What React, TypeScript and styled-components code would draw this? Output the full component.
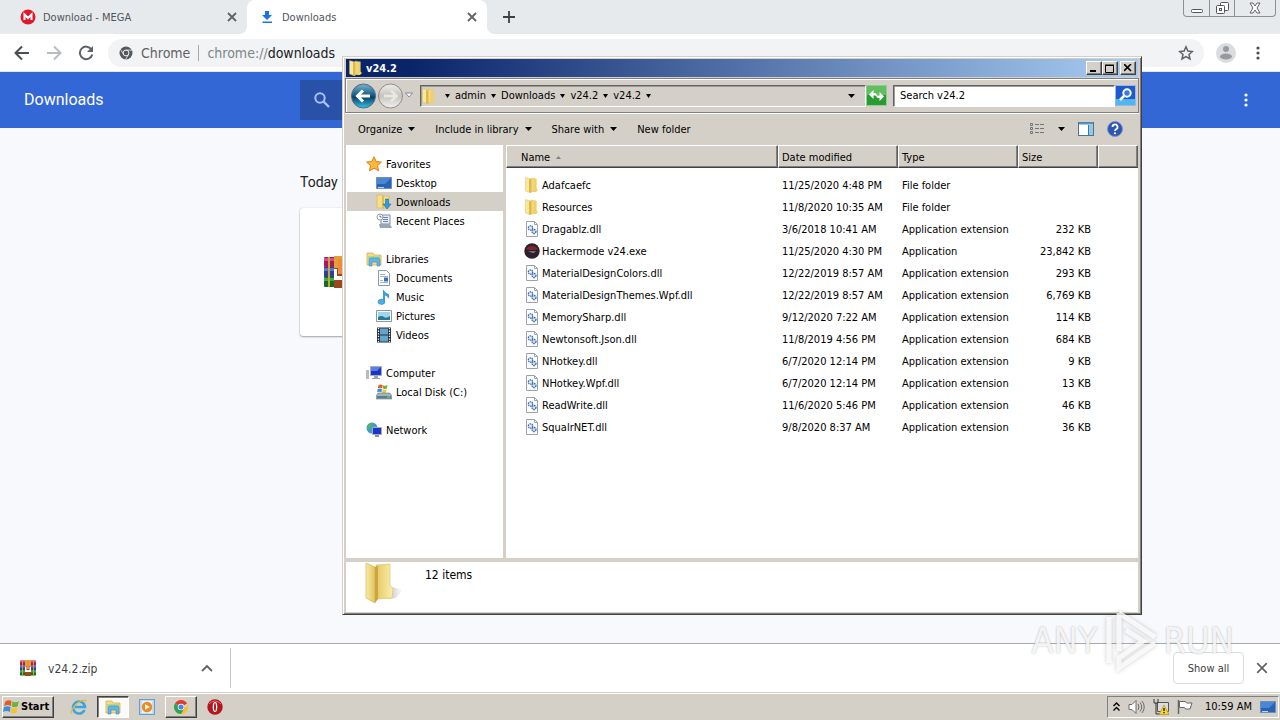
import React from "react";
import styled, { createGlobalStyle, css } from "styled-components";

const ui = `"DejaVu Sans Condensed", Tahoma, "DejaVu Sans", sans-serif`;

const GlobalStyle = createGlobalStyle`
  *, *::before, *::after { box-sizing: border-box; }
  body { margin: 0; font-family: ${ui}; font-size: 11px; color: #000; }
  button, input { font: inherit; color: inherit; }
  button { padding: 0; border: 0; background: none; cursor: pointer; }
  svg { display: block; flex: none; }
  a { color: inherit; text-decoration: none; }
`;

const Desktop = styled.div`
  position: relative;
  display: flex;
  flex-direction: column;
  min-height: 100vh;
  overflow: hidden;
  background: #f7f9fc;
`;

/* ---------- Browser ---------- */

const TabStrip = styled.header`
  display: flex;
  height: 34px;
  background: #e7eaed;
  color: #50555a;
`;

const Tab = styled.div<{ $active?: boolean }>`
  position: relative;
  display: flex;
  align-items: center;
  gap: 7px;
  width: ${p => (p.$active ? 240 : 247)}px;
  padding: 0 10px 0 ${p => (p.$active ? 12 : 20)}px;
  ${p =>
    p.$active &&
    css`
      background: #fff;
      border-radius: 8px 8px 0 0;
      &::before,
      &::after {
        content: "";
        position: absolute;
        bottom: 0;
        width: 8px;
        height: 8px;
      }
      &::before {
        left: -8px;
        background: radial-gradient(circle at 0 0, transparent 8px, #fff 8px);
      }
      &::after {
        right: -8px;
        background: radial-gradient(circle at 100% 0, transparent 8px, #fff 8px);
      }
    `}
`;

const TabTitle = styled.span`
  flex: 1;
`;

const IconButton = styled.button`
  display: grid;
  place-items: center;
  flex: none;
`;

const NewTab = styled(IconButton)`
  width: 44px;
`;

const CaptionGroup = styled.div`
  display: flex;
  height: 17px;
  margin: 0 4px 0 auto;
  border: 1px solid #8c9095;
  border-top: 0;
  border-radius: 0 0 4px 4px;
`;

const CaptionButton = styled(IconButton)<{ $wide?: boolean }>`
  width: ${p => (p.$wide ? 41 : 25)}px;
  & + & { border-left: 1px solid #8c9095; }
`;

const NavBar = styled.nav`
  display: flex;
  align-items: center;
  height: 38px;
  padding: 0 14px;
  gap: 16px;
  border-bottom: 1px solid #e4e7ea;
  background: #fff;
`;

const Omnibox = styled.div`
  display: flex;
  align-items: center;
  flex: 1;
  height: 28px;
  margin: 0 -4px 0 -2px;
  padding: 0 10px 0 11px;
  border-radius: 14px;
  background: #f1f3f4;
  font-size: 14px;
  color: #5f6368;
`;

const BrowserTools = styled.div`
  display: flex;
  align-items: center;
  gap: 14px;
`;

const SiteName = styled.span`
  margin-left: 8px;
  padding-right: 8px;
  border-right: 1px solid #a4a8ac;
`;

const Url = styled.span`
  flex: 1;
  margin-left: 8px;
  color: #80868b;
  b { font-weight: normal; color: #202124; }
`;

const PageHeader = styled.div`
  display: grid;
  grid-template-columns: 1fr minmax(0, 680px) 1fr;
  align-items: center;
  height: 56px;
  background: #3367d6;
  color: #fff;
`;

const PageTitle = styled.h1`
  margin: 0;
  padding-left: 24px;
  font: 400 16px/24px Roboto, sans-serif;
`;

const SearchDownloads = styled.label`
  display: flex;
  align-items: center;
  height: 40px;
  padding: 0 12px;
  gap: 12px;
  background: #2951a8;
  input {
    flex: 1;
    border: 0;
    outline: 0;
    background: none;
  }
`;

const HeaderMenu = styled(IconButton)`
  width: 20px;
  height: 40px;
  margin: 0 24px 0 auto;
`;

const DownloadsPage = styled.main`
  flex: 1;
  width: 100%;
  max-width: 680px;
  margin: 0 auto;
  padding-top: 44px;
`;

const DateHeading = styled.h2`
  margin: 0 0 16px;
  font: 400 14px/20px Roboto, sans-serif;
  color: #202124;
`;

const DownloadCard = styled.article`
  height: 128px;
  padding: 48px 24px;
  border-radius: 3px;
  background: #fff;
  box-shadow: 0 1px 2px rgba(0, 0, 0, 0.35), 0 0 1px rgba(0, 0, 0, 0.2);
`;

const Shelf = styled.footer`
  display: flex;
  align-items: center;
  height: 49px;
  padding-right: 12px;
  border-top: 1px solid #a9acaf;
  background: #fff;
`;

const ShelfItem = styled.div`
  display: flex;
  align-items: center;
  width: 231px;
  height: 40px;
  padding: 0 16px 0 20px;
  gap: 12px;
  border-right: 1px solid #c8cacc;
  font-size: 12px;
  color: #3c4043;
  span { flex: 1; padding-top: 2px; }
`;

const ShowAll = styled.button`
  width: 71px;
  height: 32px;
  margin: 0 12px 0 auto;
  border: 1px solid #dadce0;
  border-radius: 4px;
  color: #3c4043;
`;

/* ---------- Taskbar ---------- */

const Taskbar = styled.footer`
  display: flex;
  align-items: center;
  height: 28px;
  padding: 2px 1px 2px 2px;
  gap: 2px;
  border-top: 1px solid #d4d0c8;
  background: #d4d0c8;
  box-shadow: inset 0 1px #fff;
`;

const raised = css`
  border: 1px solid;
  border-color: #fff #404040 #404040 #fff;
  box-shadow: inset -1px -1px #808080;
`;

const StartButton = styled.button`
  ${raised}
  display: flex;
  align-items: center;
  gap: 1px;
  width: 52px;
  height: 22px;
  margin-right: 7px;
  font-weight: bold;
`;

const TaskButton = styled.button<{ $look?: "raised" | "pressed" }>`
  display: grid;
  place-items: center;
  width: 32px;
  height: 22px;
  ${p => p.$look === "raised" && raised}
  ${p =>
    p.$look === "pressed" &&
    css`
      border: 1px solid;
      border-color: #404040 #fff #fff #404040;
      box-shadow: inset 1px 1px #808080;
      background: #fbfaf8;
    `}
`;

const Tray = styled.div`
  display: flex;
  align-items: center;
  height: 22px;
  margin-left: auto;
  padding: 0 2px 0 5px;
  border: 1px solid;
  border-color: #808080 #fff #fff #808080;
  gap: 8px;
`;

const Clock = styled.time`
  margin: 0 0 0 4px;
`;

/* ---------- Explorer window ---------- */

const Window = styled.section`
  position: absolute;
  inset: 56px 138px 105px 342px;
  display: flex;
  flex-direction: column;
  padding: 1px 2px 1px 2px;
  border: 1px solid;
  border-color: #d4d0c8 #404040 #404040 #d4d0c8;
  background: #d4d0c8;
  box-shadow: inset 1px 1px #fff, inset -1px -1px #808080;
`;

const TitleBar = styled.header`
  display: flex;
  align-items: center;
  height: 18px;
  margin: 1px 1px 0;
  padding: 0 2px;
  background: linear-gradient(to right, #0a246a 8%, #a6caf0 98%);
  color: #fff;
  font-weight: bold;
  h2 { flex: 1; margin: 0 0 0 2px; font-size: 11px; }
`;

const WinButton = styled(IconButton)<{ $gap?: boolean }>`
  ${raised}
  width: 16px;
  height: 14px;
  margin-left: ${p => (p.$gap ? 2 : 0)}px;
  background: #d4d0c8;
`;

const AddressRow = styled.div`
  display: flex;
  align-items: center;
  height: 35px;
  margin: 1px 0 0;
  padding: 0 2px 0 4px;
  border: 1px solid #808080;
  box-shadow: inset 1px 1px #fff, 0 1px #fff;
`;

const sunken = css`
  border: 1px solid;
  border-color: #606060 #fff #fff #606060;
  box-shadow: inset 1px 1px #a09c94;
`;

const AddressBox = styled.div`
  ${sunken}
  display: flex;
  align-items: center;
  flex: 1;
  height: 22px;
  margin-left: 6px;
  padding: 0 10px 0 0;
  gap: 6px;
`;

const Crumbs = styled.ol`
  display: flex;
  flex: 1;
  margin: 0;
  padding: 0 0 0 2px;
  gap: 5px;
  list-style: none;
  li { display: flex; align-items: center; gap: 5px; }
`;

const SearchBox = styled.input`
  ${sunken}
  width: 222px;
  height: 22px;
  margin-left: 6px;
  padding: 0 6px;
  border-radius: 0;
  outline: 0;
  background: #fff;
  &::placeholder { color: #000; opacity: 1; }
`;

const CommandBar = styled.div`
  display: flex;
  align-items: center;
  height: 32px;
  padding: 0 16px 0 13px;
  gap: 20px;
`;

const Command = styled.button`
  display: flex;
  align-items: center;
  gap: 6px;
  height: 24px;
`;

const ViewTools = styled.div`
  display: flex;
  align-items: center;
  gap: 13px;
  margin-left: auto;
`;

const Panes = styled.div`
  display: flex;
  flex: 1;
  min-height: 0;
  margin: 0 1px;
  background: #fff;
`;

const Sidebar = styled.nav`
  width: 160px;
  padding-top: 9px;
  border-right: 3px solid #d4d0c8;
  ul { margin: 0 0 19px; padding: 0; list-style: none; }
`;

const Place = styled.a<{ $child?: boolean; $selected?: boolean }>`
  display: flex;
  align-items: center;
  height: 19px;
  margin-left: 1px;
  padding-left: ${p => (p.$child ? 29 : 19)}px;
  gap: 4px;
  line-height: 15px;
  background: ${p => (p.$selected ? "#d4d0c8" : "none")};
  span { padding-top: 2px; }
`;

const FileTable = styled.table`
  flex: 1;
  align-self: flex-start;
  table-layout: fixed;
  border-collapse: separate;
  border-spacing: 0;
  td { height: 22px; padding: 0 4px; white-space: nowrap; }
`;

const ColumnHead = styled.th<{ $first?: boolean }>`
  ${raised}
  height: 23px;
  padding: 1px 4px 0 ${p => (p.$first ? 14 : 3)}px;
  border-color: #fff #606060 #404040 #fff;
  background: #d4d0c8;
  font-weight: normal;
  text-align: left;
`;

const HeadLabel = styled.span`
  display: flex;
  align-items: center;
  gap: 6px;
`;

const Spacer = styled.tr`
  && td { height: 6px; }
`;

const FileName = styled.a`
  display: flex;
  align-items: center;
  gap: 2px;
  padding-left: 14px;
`;

const SizeCell = styled.td`
  text-align: right;
  && { padding-right: 7px; }
`;

const Details = styled.footer`
  display: flex;
  height: 54px;
  margin: 0 1px 1px;
  padding-left: 18px;
  gap: 19px;
  border-top: 4px solid #d4d0c8;
  background: #fff;
  font-size: 12px;
  p { margin: 5px 0 0; line-height: 16px; }
`;

const Watermark = styled.div`
  position: absolute;
  right: 46px;
  bottom: 44px;
  display: flex;
  align-items: center;
  height: 70px;
  gap: 4px;
  pointer-events: none;
  font: 400 36px/70px ${ui};
  color: rgba(255, 255, 255, 0.85);
  text-shadow: 0 0 2px rgba(0, 0, 0, 0.3);
  svg { filter: drop-shadow(0 0 2px rgba(0, 0, 0, 0.25)); }
`;

/* ---------- Icons ---------- */

const Caret = ({ w = 7 }: { w?: number }) => (
  <svg width={w} height="4" viewBox="0 0 8 4" preserveAspectRatio="none"><path d="M0 0h8L4 4z" /></svg>
);

const Cross = ({ s = 10 }: { s?: number }) => (
  <svg width={s} height={s} viewBox="0 0 10 10"><path d="M1 1l8 8M9 1L1 9" stroke="#5f6368" strokeWidth={s > 10 ? 1.4 : 1.8} /></svg>
);

const MegaIcon = () => (
  <svg width="16" height="16" viewBox="0 0 16 16">
    <circle cx="8" cy="8" r="7.500" fill="#e1182c" />
    <path d="M4.500 11V5.500L8 9l3.500-3.500V11" fill="none" stroke="#fff" strokeWidth="2" />
  </svg>
);

const DownloadIcon = () => (
  <svg width="16" height="16" viewBox="0 0 16 16" fill="#1a73e8">
    <path d="M6 2h4v4h3L8 11 3 6h3zM3.500 12.500h9.500V14H3.500z" />
  </svg>
);

const ArrowIcon = ({ flip, color }: { flip?: boolean; color: string }) => (
  <svg width="16" height="16" viewBox="0 0 16 16" fill="none" stroke={color} strokeWidth="2">
    <path d={flip ? "M1 8h13M8 1.500L14.500 8 8 14.500" : "M15 8H2M8 1.500L1.500 8 8 14.500"} />
  </svg>
);

const ReloadIcon = () => (
  <svg width="16" height="16" viewBox="0 0 16 16" fill="none" stroke="#5f6368" strokeWidth="2">
    <path d="M13.500 4.500A6.300 6.300 0 1 0 14.300 9.500" />
    <path d="M15 1v6H9z" fill="#5f6368" stroke="none" />
  </svg>
);

const ChromeGray = () => (
  <svg width="14" height="14" viewBox="0 0 14 14">
    <circle cx="7" cy="7" r="6.500" fill="#54585c" />
    <circle cx="7" cy="7" r="2.900" fill="none" stroke="#f1f3f4" strokeWidth="1" />
    <path d="M7 4.100h6M4.500 8.400l-3-5M9.500 8.500L6.500 13.500" stroke="#f1f3f4" strokeWidth=".8" />
  </svg>
);

const Star = () => (
  <svg width="16" height="16" viewBox="0 0 16 16">
    <path d="M8 1.800l1.900 4.200 4.500.5-3.400 3 1 4.500L8 11.700 4 14l1-4.500-3.400-3 4.500-.5z" fill="none" stroke="#5f6368" strokeWidth="1.500" />
  </svg>
);

const Avatar = () => (
  <svg width="20" height="20" viewBox="0 0 20 20">
    <circle cx="10" cy="10" r="10" fill="#dadce0" />
    <circle cx="10" cy="6" r="3" fill="#979a9e" />
    <ellipse cx="10" cy="13.500" rx="6" ry="3" fill="#979a9e" />
  </svg>
);

const Dots = ({ color }: { color: string }) => (
  <svg width="16" height="16" viewBox="0 0 16 16" fill={color}>
    <circle cx="8" cy="3" r="1.600" /><circle cx="8" cy="8" r="1.600" /><circle cx="8" cy="13" r="1.600" />
  </svg>
);

const SearchIcon = () => (
  <svg width="20" height="20" viewBox="0 0 20 20" fill="none" stroke="#a9c3f5" strokeWidth="2">
    <circle cx="8" cy="8" r="4.700" /><path d="M11.500 11.500L17 17" strokeWidth="2.400" />
  </svg>
);

const RarIcon = ({ size }: { size: number }) => (
  <svg width={size} height={size} viewBox="0 0 32 32">
    <rect y="1" width="32" height="10" rx="1" fill="#a8195c" /><rect y="2" width="32" height="3" fill="#d84a8c" />
    <rect y="11" width="32" height="10" fill="#2b3f9d" /><rect y="12" width="32" height="3" fill="#5873d6" />
    <rect y="21" width="32" height="10" rx="1" fill="#176b26" /><rect y="22" width="32" height="3" fill="#3caa48" />
    <path d="M4 1h2v30H4zM26 1h2v30h-2z" fill="#c9a72b" />
    <rect x="10" y="0" width="12" height="32" fill="#9b4a1c" /><rect x="10" y="0" width="12" height="12" fill="#e0a233" />
    <path d="M10 13h3v7h6v-7h3v11H10z" fill="#fff" /><path d="M14 3h4v15h-4z" fill="#f08a3c" />
  </svg>
);

const FolderIcon = ({ w = 16, h = 16 }: { w?: number; h?: number }) => (
  <svg width={w} height={h} viewBox="0 0 16 16">
    <path d="M7 1l5 1v12l-5 1z" fill="#f3da78" stroke="#d7b64c" strokeWidth=".4" />
    <path d="M10 2l2.500-.500v10L14 13l-2 2H9z" fill="#f0d067" />
    <path d="M1.500.500L7 2v14l-5.500-2z" fill="#f8e79c" stroke="#d3b04a" strokeWidth=".4" />
    <path d="M5 2l2 .5V16l-2-1z" fill="#dcb94e" />
  </svg>
);

const BigFolder = () => (
  <svg width="42" height="42" viewBox="0 0 42 42">
    <defs>
      <linearGradient id="fa" x1="0" x2="1"><stop offset="0" stopColor="#e6c861" /><stop offset="1" stopColor="#fbeeb0" /></linearGradient>
      <linearGradient id="fb" x1="0" x2="1"><stop offset="0" stopColor="#f9eaa4" /><stop offset="1" stopColor="#e3c45c" /></linearGradient>
      <linearGradient id="fs" x1="0" x2="1"><stop offset="0" stopColor="#888" /><stop offset="1" stopColor="#fff" /></linearGradient>
    </defs>
    <path d="M24 37l4-12 11 3-7 8z" fill="url(#fs)" opacity=".5" />
    <path d="M12 3l14-1v21l3 4-1 9-15 1z" fill="url(#fa)" stroke="#d9bd60" strokeWidth=".6" />
    <path d="M2 1l9 4v36l-9-5z" fill="url(#fb)" stroke="#cfae4c" strokeWidth=".6" />
    <path d="M11 5l3-1v33l-3 4z" fill="#c9a544" />
  </svg>
);

const NavButtonIcon = ({ back }: { back?: boolean }) => (
  <svg width="27" height="26" viewBox="0 0 27 26">
    <defs>
      <linearGradient id="nb" x2="0" y2="1"><stop offset="0" stopColor="#7db2cc" /><stop offset=".45" stopColor="#17618d" /><stop offset=".55" stopColor="#074069" /><stop offset="1" stopColor="#37c4e8" /></linearGradient>
      <linearGradient id="nf" x2="0" y2="1"><stop offset="0" stopColor="#eeeeec" /><stop offset=".5" stopColor="#c6c4bf" /><stop offset="1" stopColor="#f2f1ef" /></linearGradient>
    </defs>
    <circle cx="13.500" cy="13" r="12" fill={back ? "url(#nb)" : "url(#nf)"} stroke={back ? "#4c6c80" : "#8e8c88"} />
    {back
      ? <path d="M20 13H9M13 7.500L7.500 13l5.500 5.500" fill="none" stroke="#fff" strokeWidth="3" />
      : <path d="M7 13h11M14 7.500l5.500 5.500-5.500 5.500" fill="none" stroke="#e9e8e6" strokeWidth="2.500" />}
  </svg>
);

const RefreshIcon = () => (
  <svg width="21" height="21" viewBox="0 0 21 21">
    <rect x=".5" y=".5" width="20" height="20" fill="#2a9a35" stroke="#8ccf8e" />
    <rect x="1" y="1" width="19" height="9" fill="#63bd63" />
    <path d="M3 9.500L7.500 5v3H9q2 0 2 4-1-1.500-2-1.500H7.500V14zM18 11.500L13.500 16v-3H12q-2 0-2-4 1 1.500 2 1.500h1.500V7z" fill="#fff" />
  </svg>
);

const FindIcon = () => (
  <svg width="21" height="21" viewBox="0 0 21 21">
    <rect x=".5" y=".5" width="20" height="20" fill="#1c59cf" stroke="#9db7e0" />
    <rect x="1" y="14" width="19" height="6" fill="#4fb6f3" />
    <circle cx="12" cy="8" r="3.700" fill="#3c78dd" stroke="#fff" strokeWidth="2" /><path d="M9 11l-4 4" stroke="#fff" strokeWidth="2.500" />
  </svg>
);

const ViewIcon = () => (
  <svg width="16" height="14" viewBox="0 0 16 14" fill="none" stroke="#70757a">
    <path d="M1.500 1.500h2v2h-2zM1.500 5.500h2v2h-2zM1.500 9.500h2v2h-2z" />
    <path d="M6 2.500h4M11 2.500h4M6 6.500h4M11 6.500h4M6 10.500h4M11 10.500h4" />
  </svg>
);

const PaneIcon = () => (
  <svg width="16" height="14" viewBox="0 0 16 14">
    <rect x=".5" y=".5" width="15" height="13" fill="#fff" stroke="#47749c" />
    <path d="M1 1.500h14" stroke="#5d93bd" strokeWidth="2" /><rect x="10" y="3" width="5" height="10" fill="#8ecbe8" /><path d="M10.500 3v10" stroke="#47749c" />
  </svg>
);

const HelpIcon = () => (
  <svg width="16" height="16" viewBox="0 0 16 16">
    <circle cx="8" cy="8" r="7.500" fill="#2b55b8" stroke="#7f92bd" />
    <path d="M5.500 6a2.500 2.500 0 1 1 3.600 2.200C8.300 8.700 8 9 8 10" fill="none" stroke="#fff" strokeWidth="1.800" /><circle cx="8" cy="12.300" r="1.100" fill="#fff" />
  </svg>
);

const DllIcon = () => (
  <svg width="16" height="16" viewBox="0 0 16 16">
    <path d="M2.500.5h8l3 3v12h-11z" fill="#fdfdfe" stroke="#9aa3ad" /><path d="M10.500.5v3h3" fill="none" stroke="#9aa3ad" />
    <circle cx="6.500" cy="7" r="2.200" fill="#e4eefa" stroke="#3c6da9" strokeWidth="1.300" strokeDasharray="1.500 .6" />
    <circle cx="10" cy="10.500" r="2" fill="#cfe2f7" stroke="#3c6da9" strokeWidth="1.300" strokeDasharray="1.500 .6" />
  </svg>
);

const ExeIcon = () => (
  <svg width="16" height="16" viewBox="0 0 16 16">
    <circle cx="8" cy="8" r="7.700" fill="#30202a" /><path d="M2 6c3-4 9-4 12 0l-3 1H5z" fill="#7d2530" /><path d="M4 8h8l-2 2H8z" fill="#6b707c" />
  </svg>
);

const Sheet = ({ children }: { children?: React.ReactNode }) => (
  <svg width="16" height="16" viewBox="0 0 16 16">{children}</svg>
);

const LibraryShape = () => (
  <>
    <path d="M1 2h6l1 2h7v10H1z" fill="#f5dc7c" stroke="#cda94a" strokeWidth=".7" />
    <path d="M2 5h12v3H2z" fill="#a7d99a" />
    <path d="M3 15V9q0-2 2-2h7q2 0 2 2v6h-3v-4H6v4z" fill="#66b4e6" stroke="#4287bb" strokeWidth=".6" />
  </>
);

const FlagShape = () => (
  <>
    <path d="M2 3q3-2 5.500-.3L7 7Q4 5.500 1 7z" fill="#e85a24" /><path d="M8.300 3Q11 4.500 14 2.800l-1 4.400q-2.500 1.600-5.300.2z" fill="#6cb33e" />
    <path d="M1 8q3-1.500 5.700 0L6 12.300Q3 10.800 0 12.300z" fill="#3e8ede" /><path d="M7.500 8.400q2.500 1.500 5.300 0L12 12.800q-2.800 1.500-5.200.1z" fill="#f8c22f" />
  </>
);

const placeIcons: Record<string, React.ReactNode> = {
  star: <path d="M8 .8l2.200 4.700 5.200.6-3.900 3.500 1.100 5.200L8 12.200l-4.600 2.600 1.100-5.200L.6 6.100l5.200-.6z" fill="#fbb83a" stroke="#dd7e1b" />,
  desktop: <><path d="M.5 2.500h15v11H.5z" fill="#2b62b5" stroke="#6e8fb8" /><path d="M1 3h14L9 9H1z" fill="#4b86d2" /><path d="M2 12.500h6" stroke="#b9d5f1" /></>,
  downloads: <><path d="M1 1h5l1 1h6v12H1z" fill="#f6df85" stroke="#d5b34d" strokeWidth=".6" /><path d="M6 1l2 1v13l-2-1z" fill="#dfbd54" /><path d="M9.500 5h3v5H15l-4 5-4-5h2.500z" fill="#2f9be0" stroke="#1972b0" strokeWidth=".6" /></>,
  recent: <><path d="M5 2h9v9h-9z" fill="#e9eef5" stroke="#7e8fa6" /><path d="M7 4.500h5M7 6.500h5M7 8.500h5" stroke="#6283b5" /><circle cx="4" cy="4" r="3" fill="#fff" stroke="#99a" /><path d="M4 2.500V4h1.500" fill="none" stroke="#567" /><path d="M3 11h11l2 4H4z" fill="#9aa4b2" /></>,
  libraries: <LibraryShape />,
  documents: <><path d="M2.500.5h8l3 3v12h-11z" fill="#fff" stroke="#8d98a6" /><path d="M4 4.500h5M4 6.500h8M4 12.500h8M4 10.500h3" stroke="#9db4d4" /><path d="M8 7.500h4v4H8z" fill="#3f6db2" /></>,
  music: <><path d="M8 1q1 3 5 4 1 3-1 5 0-3-3-3.500V13H7V1z" fill="#3d9fd8" /><ellipse cx="5.500" cy="12.800" rx="3.500" ry="2.700" fill="#49aee2" stroke="#2a80b5" strokeWidth=".5" /></>,
  pictures: <><path d="M.5 2.500h15v11H.5z" fill="#fff" stroke="#8b97a3" /><path d="M2 4h12v8H2z" fill="#9fd6ee" /><path d="M2 9q4-2 6 0t6-1v4H2z" fill="#2a7990" /></>,
  videos: <><path d="M1 .5h14v15H1z" fill="#283038" /><path d="M4 1.500h8v6H4zM4 8.500h8v6H4z" fill="#62a5cf" /><path d="M2.500 1v14M13.500 1v14" stroke="#fff" strokeWidth="1.200" strokeDasharray="1.300 1.300" /></>,
  computer: <><path d="M0 5h3v9H0z" fill="#b8bcc2" /><path d="M4.500 1.500h11v9h-11z" fill="#1c35c8" stroke="#a5adba" /><path d="M5 2h10l-4 4H5z" fill="#5c7ceb" /><path d="M8 11h4v2h2v1H6v-1h2z" fill="#9ba3ae" /></>,
  disk: <><g transform="translate(1 -1) scale(.75)"><FlagShape /></g><path d="M2 9h12l2 3v3H0v-3z" fill="#9fb3bd" stroke="#697d87" strokeWidth=".6" /><path d="M1 12h14v2.500H1z" fill="#5b7d8d" /><path d="M11 13h3" stroke="#7fe05e" /></>,
  network: <><circle cx="6" cy="6" r="5.500" fill="#3f9bd2" /><path d="M2 3q3-3 5-2L5 5 3 8Q0 6 2 3zM8 4l3 1-2 4z" fill="#58b45c" /><path d="M6.500 5.500h9v7h-9z" fill="#1c35c8" stroke="#a5adba" /><path d="M9 13h4v2H9z" fill="#98a" /></>,
};

const ChromeColor = () => (
  <svg width="14" height="14" viewBox="0 0 16 16">
    <path d="M8 8L1.070 4A8 8 0 0 1 14.930 4z" fill="#e33b2e" /><path d="M8 8h6.930L14.930 4A8 8 0 0 1 8 16z" fill="#fbc116" /><path d="M8 8L1.070 4A8 8 0 0 0 8 16l3.500-6z" fill="#31a350" />
    <circle cx="8" cy="8" r="3.700" fill="#fff" /><circle cx="8" cy="8" r="2.900" fill="#4285f4" />
  </svg>
);

const IeIcon = () => (
  <svg width="18" height="18" viewBox="0 0 18 18" fill="none">
    <path d="M14.500 12A6 6 0 1 1 15 9H5" stroke="#3aa5df" strokeWidth="2.600" /><path d="M2 15C-1 17 3 7 11 3q5-2 5 1" stroke="#e9b93b" strokeWidth="1.300" />
  </svg>
);

const MediaIcon = () => (
  <svg width="16" height="16" viewBox="0 0 17 17">
    <rect x=".5" y=".5" width="16" height="16" fill="#b9dbf3" stroke="#5e9ccb" /><rect x="3" y="2" width="11" height="13" fill="#e6f2fb" />
    <circle cx="8.500" cy="8.500" r="5.500" fill="#f18a1b" /><path d="M6.500 5.500l5 3-5 3z" fill="#fff" />
  </svg>
);

const OperaIcon = () => (
  <svg width="16" height="16" viewBox="0 0 16 16">
    <circle cx="8" cy="8" r="7.700" fill="#b5151b" /><path d="M2 5q6-6 12 0" stroke="#e46a6a" fill="none" /><ellipse cx="8" cy="8" rx="2.300" ry="5" fill="#fff" /><ellipse cx="8" cy="8" rx="1" ry="4" fill="#b5151b" />
  </svg>
);

/* ---------- Data ---------- */

type PlaceEntry = [icon: string, label: string];
const places: PlaceEntry[][] = [
  [["star", "Favorites"], ["desktop", "Desktop"], ["downloads", "Downloads"], ["recent", "Recent Places"]],
  [["libraries", "Libraries"], ["documents", "Documents"], ["music", "Music"], ["pictures", "Pictures"], ["videos", "Videos"]],
  [["computer", "Computer"], ["disk", "Local Disk (C:)"]],
  [["network", "Network"]],
];

const files = [
  ["Adafcaefc", "11/25/2020 4:48 PM", "File folder", ""],
  ["Resources", "11/8/2020 10:35 AM", "File folder", ""],
  ["Dragablz.dll", "3/6/2018 10:41 AM", "Application extension", "232 KB"],
  ["Hackermode v24.exe", "11/25/2020 4:30 PM", "Application", "23,842 KB"],
  ["MaterialDesignColors.dll", "12/22/2019 8:57 AM", "Application extension", "293 KB"],
  ["MaterialDesignThemes.Wpf.dll", "12/22/2019 8:57 AM", "Application extension", "6,769 KB"],
  ["MemorySharp.dll", "9/12/2020 7:22 AM", "Application extension", "114 KB"],
  ["Newtonsoft.Json.dll", "11/8/2019 4:56 PM", "Application extension", "684 KB"],
  ["NHotkey.dll", "6/7/2020 12:14 PM", "Application extension", "9 KB"],
  ["NHotkey.Wpf.dll", "6/7/2020 12:14 PM", "Application extension", "13 KB"],
  ["ReadWrite.dll", "11/6/2020 5:46 PM", "Application extension", "46 KB"],
  ["SqualrNET.dll", "9/8/2020 8:37 AM", "Application extension", "36 KB"],
];

const fileIcon = (type: string) =>
  type === "File folder" ? <FolderIcon /> : type === "Application" ? <ExeIcon /> : <DllIcon />;

/* ---------- Views ---------- */

const Browser = () => (
  <>
    <TabStrip>
      <Tab>
        <MegaIcon /><TabTitle>Download - MEGA</TabTitle>
        <IconButton aria-label="Close tab"><Cross /></IconButton>
      </Tab>
      <Tab $active>
        <DownloadIcon /><TabTitle>Downloads</TabTitle>
        <IconButton aria-label="Close tab"><Cross /></IconButton>
      </Tab>
      <NewTab aria-label="New tab">
        <svg width="14" height="14" viewBox="0 0 14 14"><path d="M7 1v12M1 7h12" stroke="#3c4043" strokeWidth="1.800" /></svg>
      </NewTab>
      <CaptionGroup>
        <CaptionButton aria-label="Minimize browser">
          <svg width="12" height="14" viewBox="0 0 12 14"><rect x=".5" y="8.500" width="11" height="3" rx="1" fill="#fff" stroke="#50555a" /></svg>
        </CaptionButton>
        <CaptionButton aria-label="Restore browser">
          <svg width="13" height="14" viewBox="0 0 13 14" fill="#fff" stroke="#50555a"><rect x="4.500" y="1.500" width="8" height="8" rx="1" /><rect x=".5" y="4.500" width="8" height="8" rx="1" /><rect x="3.500" y="7.500" width="2" height="2" /></svg>
        </CaptionButton>
        <CaptionButton $wide aria-label="Close browser">
          <svg width="12" height="12" viewBox="0 0 12 12"><path d="M1 1h3l2 3 2-3h3L8 6l3 5H8L6 8l-2 3H1l3-5z" fill="#fff" stroke="#50555a" strokeWidth=".9" /></svg>
        </CaptionButton>
      </CaptionGroup>
    </TabStrip>
    <NavBar>
      <IconButton aria-label="Back"><ArrowIcon color="#4b4f53" /></IconButton>
      <IconButton aria-label="Forward"><ArrowIcon flip color="#b9bcbf" /></IconButton>
      <IconButton aria-label="Reload"><ReloadIcon /></IconButton>
      <Omnibox>
        <ChromeGray />
        <SiteName>Chrome</SiteName>
        <Url>chrome://<b>downloads</b></Url>
        <IconButton aria-label="Bookmark this page"><Star /></IconButton>
      </Omnibox>
      <BrowserTools>
        <IconButton aria-label="Profile"><Avatar /></IconButton>
        <IconButton aria-label="Browser menu"><Dots color="#4b4f53" /></IconButton>
      </BrowserTools>
    </NavBar>
    <PageHeader>
      <PageTitle>Downloads</PageTitle>
      <SearchDownloads><SearchIcon /><input type="search" aria-label="Search downloads" /></SearchDownloads>
      <HeaderMenu aria-label="More actions"><Dots color="#fff" /></HeaderMenu>
    </PageHeader>
    <DownloadsPage>
      <DateHeading>Today</DateHeading>
      <DownloadCard><RarIcon size={32} /></DownloadCard>
    </DownloadsPage>
    <Shelf>
      <ShelfItem>
        <RarIcon size={16} /><span>v24.2.zip</span>
        <IconButton aria-label="Download options">
          <svg width="14" height="10" viewBox="0 0 14 10"><path d="M2 8l5-5 5 5" fill="none" stroke="#5f6368" strokeWidth="1.800" /></svg>
        </IconButton>
      </ShelfItem>
      <ShowAll>Show all</ShowAll>
      <IconButton aria-label="Close downloads bar"><Cross s={12} /></IconButton>
    </Shelf>
  </>
);

const Explorer = () => (
  <Window>
    <TitleBar>
      <FolderIcon /><h2>v24.2</h2>
      <WinButton aria-label="Minimize"><svg width="8" height="8"><path d="M0 6h6v2H0z" /></svg></WinButton>
      <WinButton aria-label="Maximize"><svg width="10" height="9"><path d="M.5 1.500h8v7h-8zM0 1h9" fill="none" stroke="#000" /></svg></WinButton>
      <WinButton $gap aria-label="Close"><svg width="8" height="8"><path d="M0 0l7 7M7 0L0 7" stroke="#000" strokeWidth="1.600" /></svg></WinButton>
    </TitleBar>
    <AddressRow>
      <IconButton aria-label="Back"><NavButtonIcon back /></IconButton>
      <IconButton aria-label="Forward"><NavButtonIcon /></IconButton>
      <IconButton aria-label="Recent locations"><svg width="10" height="7" viewBox="0 0 10 7"><path d="M1.500 1h7L5 5z" fill="#fff" stroke="#7d8a96" /></svg></IconButton>
      <AddressBox>
        <FolderIcon />
        <Crumbs>
          <li><Caret w={5} /></li>
          {["admin", "Downloads", "v24.2", "v24.2"].map((c, i) => (
            <li key={i}><a href="#">{c}</a><Caret w={5} /></li>
          ))}
        </Crumbs>
        <IconButton aria-label="Previous locations"><Caret /></IconButton>
      </AddressBox>
      <IconButton aria-label="Refresh"><RefreshIcon /></IconButton>
      <SearchBox type="text" aria-label="Search v24.2" placeholder="Search v24.2" />
      <IconButton aria-label="Find"><FindIcon /></IconButton>
    </AddressRow>
    <CommandBar>
      <Command>Organize <Caret /></Command>
      <Command>Include in library <Caret /></Command>
      <Command>Share with <Caret /></Command>
      <Command>New folder</Command>
      <ViewTools>
        <Command aria-label="Change view"><ViewIcon /></Command>
        <Command aria-label="View options"><Caret /></Command>
        <Command aria-label="Preview pane"><PaneIcon /></Command>
        <Command aria-label="Help"><HelpIcon /></Command>
      </ViewTools>
    </CommandBar>
    <Panes>
      <Sidebar>
        {places.map(group => (
          <ul key={group[0][1]}>
            {group.map(([icon, label], i) => (
              <li key={label}>
                <Place href="#" $child={i > 0} $selected={label === "Downloads"}>
                  <Sheet>{placeIcons[icon]}</Sheet><span>{label}</span>
                </Place>
              </li>
            ))}
          </ul>
        ))}
      </Sidebar>
      <FileTable>
        <colgroup><col /><col width="120" /><col width="120" /><col width="80" /><col width="40" /></colgroup>
        <thead>
          <tr>
            <ColumnHead $first><HeadLabel>Name <svg width="5" height="3"><path d="M0 3l2.500-3L5 3z" fill="#808080" /></svg></HeadLabel></ColumnHead>
            <ColumnHead>Date modified</ColumnHead>
            <ColumnHead>Type</ColumnHead>
            <ColumnHead>Size</ColumnHead>
            <ColumnHead as="td" />
          </tr>
        </thead>
        <tbody>
          <Spacer><td colSpan={5} /></Spacer>
          {files.map(([name, date, type, size]) => (
            <tr key={name}>
              <td><FileName href="#">{fileIcon(type)}{name}</FileName></td>
              <td>{date}</td>
              <td>{type}</td>
              <SizeCell>{size}</SizeCell>
              <td />
            </tr>
          ))}
        </tbody>
      </FileTable>
    </Panes>
    <Details><BigFolder /><p>12 items</p></Details>
  </Window>
);

export default function App() {
  return (
    <Desktop>
      <GlobalStyle />
      <Browser />
      <Taskbar>
        <StartButton><svg width="17" height="17" viewBox="0 0 15 15"><FlagShape /></svg>Start</StartButton>
        <TaskButton aria-label="Internet Explorer"><IeIcon /></TaskButton>
        <TaskButton $look="pressed" aria-label="Windows Explorer"><Sheet><LibraryShape /></Sheet></TaskButton>
        <TaskButton aria-label="Media Player"><MediaIcon /></TaskButton>
        <TaskButton $look="raised" aria-label="Chrome"><ChromeColor /></TaskButton>
        <TaskButton aria-label="Opera"><OperaIcon /></TaskButton>
        <Tray>
          <svg width="7" height="10" viewBox="0 0 7 10" fill="none" stroke="#000" strokeWidth="1.400"><path d="M.5 4l3-3 3 3M.5 8.500l3-3 3 3" /></svg>
          <svg width="17" height="16" viewBox="0 0 17 16" fill="#fff" stroke="#6d6d6d"><path d="M1 5.500h3l4-4v13l-4-4H1z" /><path d="M10 5q2 3 0 6M12 3.500q3.500 4.500 0 9M14 2q4.500 6 0 12" fill="none" /></svg>
          <svg width="16" height="16" viewBox="0 0 16 16"><path d="M4.500 3.500h11v9h-11z" fill="#d8dce0" stroke="#555" /><path d="M1 0v4h4V0M3 4v11h4" fill="none" stroke="#333" /><path d="M11 6l5 9.500H6z" fill="#f8d52a" stroke="#a88a10" strokeWidth=".6" /><path d="M11 9v3M11 13v1.300" stroke="#000" strokeWidth="1.200" /></svg>
          <svg width="16" height="16" viewBox="0 0 16 16" fill="#fff" stroke="#666"><path d="M1.500 1v14" strokeWidth="1.500" /><path d="M2.500 2.500h6l1 1.500h5.500l-2 6H8.500l-1-1.500h-5z" /></svg>
          <Clock>10:59 AM</Clock>
          <Sheet>{placeIcons.desktop}</Sheet>
        </Tray>
      </Taskbar>
      <Explorer />
      <Watermark>
        ANY
        <svg width="58" height="66" viewBox="0 0 58 66" fill="none" stroke="rgba(255,255,255,.8)" strokeWidth="5">
          <path d="M7 9v46M17 5l36 24M17 5v38M53 35L17 60V50l24-17-17-11" />
        </svg>
        RUN
      </Watermark>
    </Desktop>
  );
}
